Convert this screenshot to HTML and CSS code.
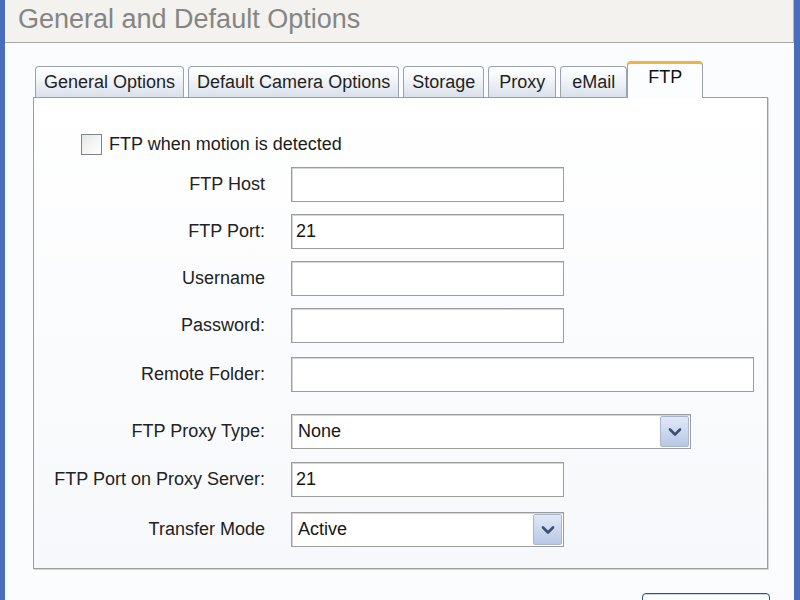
FILE: index.html
```html
<!DOCTYPE html>
<html lang="en">
<head>
<meta charset="utf-8">
<title>General and Default Options</title>
<link rel="stylesheet" href="styles.css">
</head>
<body>
<div class="frame">
  <header class="titlebar">
    <h1 class="title">General and Default Options</h1>
  </header>
  <main class="content">
    <nav class="tabs">
      <div class="tab">General Options</div>
      <div class="tab">Default Camera Options</div>
      <div class="tab">Storage</div>
      <div class="tab tab-mid">Proxy</div>
      <div class="tab tab-wide">eMail</div>
      <div class="tab active">FTP</div>
    </nav>
    <section class="panel">
      <label class="check-row">
        <span class="checkbox"></span>
        <span class="check-label">FTP when motion is detected</span>
      </label>
      <div class="form">
        <div class="label">FTP Host</div>
        <div class="field w-short"></div>

        <div class="label">FTP Port:</div>
        <div class="field w-short">21</div>

        <div class="label">Username</div>
        <div class="field w-short"></div>

        <div class="label">Password:</div>
        <div class="field w-short"></div>

        <div class="label gap-a">Remote Folder:</div>
        <div class="field w-long gap-a"></div>

        <div class="label gap-b">FTP Proxy Type:</div>
        <div class="select w-mid gap-b">
          <span class="select-value">None</span>
          <span class="drop"><svg width="14" height="10" viewBox="0 0 14 10"><path d="M2 2.5 L7 7.5 L12 2.5" fill="none" stroke="#3f4f70" stroke-width="2.6" stroke-linecap="round" stroke-linejoin="round"/></svg></span>
        </div>

        <div class="label gap-c">FTP Port on Proxy Server:</div>
        <div class="field w-short gap-c">21</div>

        <div class="label gap-d">Transfer Mode</div>
        <div class="select w-short gap-d">
          <span class="select-value">Active</span>
          <span class="drop"><svg width="14" height="10" viewBox="0 0 14 10"><path d="M2 2.5 L7 7.5 L12 2.5" fill="none" stroke="#3f4f70" stroke-width="2.6" stroke-linecap="round" stroke-linejoin="round"/></svg></span>
        </div>
      </div>
    </section>
    <div class="actions">
      <button class="btn" type="button" aria-label="OK"></button>
    </div>
  </main>
</div>
</body>
</html>
```
FILE: styles.css
```css
html, body {
  margin: 0;
  padding: 0;
  width: 800px;
  height: 600px;
  overflow: hidden;
  background: #fbfcfd;
  font-family: "Liberation Sans", Arial, sans-serif;
  color: #1c1c1c;
}

.frame {
  box-sizing: border-box;
  width: 800px;
  height: 600px;
  overflow: hidden;
  border-left: 5px solid #4a6dbb;
  border-right: 6px solid #4a6dbb;
  display: flex;
  flex-direction: column;
  background: #fbfcfd;
}

.titlebar {
  flex-shrink: 0;
  height: 43px;
  box-sizing: border-box;
  background: #f3f2ee;
  border-bottom: 1px solid #a9a9a6;
  border-right: 1px solid #b4b4b0;
  display: flex;
  align-items: center;
  padding-left: 13px;
}

.title {
  margin: 0;
  font-weight: normal;
  font-size: 27px;
  color: #858585;
  line-height: 1;
  padding-bottom: 4px;
}

.content {
  flex-shrink: 0;
  padding: 18px 0 0 28px;
  display: flex;
  flex-direction: column;
}

.tabs {
  display: flex;
  align-items: flex-end;
  padding-left: 2px;
  gap: 4px;
}

.tab {
  box-sizing: border-box;
  height: 31px;
  padding: 0 8px;
  border: 1px solid #9aa2ac;
  border-bottom: none;
  border-radius: 4px 4px 0 0;
  background: linear-gradient(to bottom, #ffffff 0%, #f1f4f8 45%, #d9e0ea 100%);
  font-size: 18px;
  line-height: 31px;
  color: #1f1f1f;
  white-space: nowrap;
}

.tab-mid {
  padding: 0 10px;
}

.tab-wide {
  padding: 0 11px;
}

.tab.active {
  height: 37px;
  margin-bottom: -1px;
  margin-left: -4px;
  padding: 0 20px 0 20px;
  border-top: 3px solid #f0b445;
  background: #fcfdfe;
  line-height: 26px;
  position: relative;
  z-index: 1;
  color: #111;
}

.panel {
  box-sizing: border-box;
  width: 735px;
  height: 472px;
  border: 1px solid #9c9c9c;
  box-shadow: 1px 1px 0 #d4d4d4;
  background: linear-gradient(to bottom, #ffffff 0%, #f6f8fb 100%);
  padding: 36px 0 0 47px;
}

.check-row {
  display: flex;
  align-items: center;
  gap: 7px;
  height: 21px;
}

.checkbox {
  box-sizing: border-box;
  width: 21px;
  height: 21px;
  border: 1px solid #7b8590;
  background: linear-gradient(135deg, #e6e6e2 0%, #f7f7f5 60%, #ffffff 100%);
}

.check-label {
  font-size: 18px;
  color: #1c1c1c;
}

.form {
  display: grid;
  grid-template-columns: 231px auto;
  column-gap: 26px;
  row-gap: 12px;
  margin: 12px 0 0 -47px;
  justify-items: start;
  align-items: center;
}

.label {
  justify-self: end;
  font-size: 18px;
  color: #222;
  white-space: nowrap;
}

.field, .select {
  box-sizing: border-box;
  height: 35px;
  border: 1px solid #9d9d9d;
  box-shadow: inset 1px 1px 0 #d6d6d6;
  background: #ffffff;
  font-size: 18px;
  line-height: 33px;
  padding-left: 4px;
  color: #161616;
}

.w-short { width: 273px; }
.w-mid { width: 400px; }
.w-long { width: 463px; }

.gap-a { margin-top: 2px; }
.gap-b { margin-top: 10px; }
.gap-c { margin-top: 1px; }
.gap-d { margin-top: 3px; }

.select {
  display: flex;
  align-items: stretch;
  padding: 1px 1px 1px 6px;
  line-height: 31px;
}

.select-value {
  flex: 1;
}

.drop {
  box-sizing: border-box;
  width: 29px;
  border: 1px solid #a9b6d0;
  border-radius: 2px;
  background: linear-gradient(to bottom, #e2e9f7 0%, #c9d5ee 60%, #b8c7e6 100%);
  display: flex;
  align-items: center;
  justify-content: center;
}

.actions {
  width: 737px;
  display: flex;
  justify-content: flex-end;
  margin-top: 24px;
}

.btn {
  box-sizing: border-box;
  width: 128px;
  height: 30px;
  border: 1px solid #2a4f94;
  border-radius: 4px;
  background: linear-gradient(to bottom, #ffffff 0%, #eef2fa 100%);
  box-shadow: inset 0 1px 0 #c8d6f2, inset 0 -1px 0 #b8c8e8;
}
```
